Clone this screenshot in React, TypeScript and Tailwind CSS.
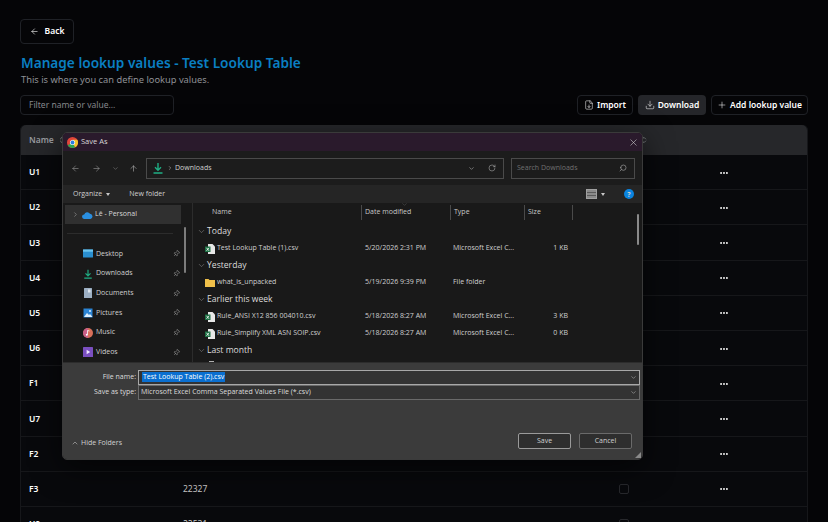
import { ArrowLeft, ArrowRight, ArrowUp, ChevronDown, ChevronRight, ChevronUp, ChevronsUpDown, Download, Ellipsis, FileDown, Plus, RotateCw, Search, Pin, X } from "lucide-react";
import type { ReactNode } from "react";

const rows = [
  ["U1", ""], ["U2", ""], ["U3", ""], ["U4", ""], ["U5", ""], ["U6", ""], ["F1", ""], ["U7", ""], ["F2", ""], ["F3", "22327"], ["U8", "22531"],
];

function DownArrow({ size = 12 }: { size?: number }) {
  return (
    <svg width={size} height={size} viewBox="0 0 12 12" fill="none" stroke="#1fae84" strokeWidth="1.4">
      <path d="M6 1v7M3 5.2 6 8.2 9 5.2M1.5 11h9" />
    </svg>
  );
}

const sidebarItems: { name: string; icon: ReactNode }[] = [
  {
    name: "Desktop",
    icon: (
      <svg width="10" height="9" viewBox="0 0 10 9">
        <rect width="10" height="8" y=".5" rx=".6" fill="#2a8fd0" />
        <rect width="10" height="2.2" y=".5" fill="#6cc4ee" />
      </svg>
    ),
  },
  { name: "Downloads", icon: <DownArrow size={10} /> },
  {
    name: "Documents",
    icon: (
      <svg width="10" height="10" viewBox="0 0 10 10">
        <rect x="1" width="8" height="10" rx=".6" fill="#9db0c4" />
        <rect x="5" y="1.5" width="2.5" height="3" fill="#dfe6ee" />
      </svg>
    ),
  },
  {
    name: "Pictures",
    icon: (
      <svg width="10" height="10" viewBox="0 0 10 10">
        <rect width="9" height="9" x=".5" y=".5" fill="#2b84d4" />
        <path d="M1 9 4 5l2 2 1-1 2.5 3z" fill="#dcefff" />
        <circle cx="7" cy="3" r="1" fill="#dcefff" />
      </svg>
    ),
  },
  {
    name: "Music",
    icon: (
      <svg width="10" height="10" viewBox="0 0 10 10">
        <circle cx="5" cy="5" r="5" fill="#d9705a" />
        <path d="M0 5a5 5 0 0 1 5-5v10a5 5 0 0 1-5-5" fill="#c85f88" />
        <path d="M4.5 2.5v4M4.5 2.5 6.5 3" stroke="#fff" strokeWidth=".8" fill="none" />
        <circle cx="3.8" cy="6.8" r="1" fill="#fff" />
      </svg>
    ),
  },
  {
    name: "Videos",
    icon: (
      <svg width="10" height="10" viewBox="0 0 10 10">
        <rect width="10" height="10" rx=".6" fill="#7a4fc0" />
        <path d="M3.6 2.8v4.4L7.2 5z" fill="#f0e6ff" />
      </svg>
    ),
  },
];

function Excel() {
  return (
    <svg width="10" height="10" viewBox="0 0 10 10" className="shrink-0">
      <path d="M3 0h4.5L10 2.5V10H3z" fill="#e8e8e8" />
      <rect x="0" y="2.5" width="5.5" height="5.5" fill="#1d7044" />
      <path d="M1.5 3.8 4 6.8M4 3.8 1.5 6.8" stroke="#fff" strokeWidth=".8" />
    </svg>
  );
}

function Folder() {
  return (
    <svg width="10" height="9" viewBox="0 0 10 9" className="shrink-0">
      <path d="M0 1h3.5l1 1H10v7H0z" fill="#f0c04a" />
    </svg>
  );
}

function Group({ label }: { label: string }) {
  return (
    <div className="h-[17px] flex items-center gap-px text-[8.6px] text-[#dcdcdc]">
      <ChevronDown size={9} strokeWidth={1.2} className="text-[#a0a0a0]" />
      {label}
    </div>
  );
}

function FileRow({ name, date, type, size, folder }: { name: string; date: string; type: string; size?: string; folder?: boolean }) {
  return (
    <div className="h-[17px] flex items-center text-[7px] text-[#d0d0d0]">
      <div className="w-[168px] pl-[8px] flex items-center gap-[2px]">
        {folder ? <Folder /> : <Excel />}
        <span>{name}</span>
      </div>
      <div className="w-[88px]">{date}</div>
      <div className="w-[74px]">{type}</div>
      <div className="w-[41px] text-right">{size}</div>
    </div>
  );
}

export default function App() {
  return (
    <div className="relative w-[828px] h-[522px] overflow-hidden bg-[#050507] font-['Noto_Sans',sans-serif] text-white">
      <div className="px-5 pt-[19px]">
        <button className="w-[54px] h-[25px] flex items-center justify-center gap-[6px] rounded-[4px] border border-[#1f2126] text-[8.5px] font-semibold">
          <ArrowLeft size={9} strokeWidth={1.6} />
          Back
        </button>
        <h1 className="mt-[9px] pl-px text-[13.65px] leading-[20px] font-semibold text-[#0a7fc2]">Manage lookup values - Test Lookup Table</h1>
        <p className="pl-px text-[9.3px] leading-[14px] text-[#8f9196]">This is where you can define lookup values.</p>
        <div className="mt-[8px] flex items-center justify-between h-[20px]">
          <div className="w-[154px] h-[20px] px-2 flex items-center rounded-[4px] border border-[#1f2126] text-[8.5px] text-[#85878c]">Filter name or value...</div>
          <div className="flex gap-[5px]">
            <button className="w-[56px] h-[20px] flex items-center justify-center gap-[3px] rounded-[4px] border border-[#1f2126] text-[8.5px] font-semibold">
              <FileDown size={10} strokeWidth={1.3} />
              Import
            </button>
            <button className="w-[68px] h-[20px] flex items-center justify-center gap-[3px] rounded-[4px] bg-[#25262a] text-[8.5px] font-semibold">
              <Download size={10} strokeWidth={1.3} />
              Download
            </button>
            <button className="w-[97px] h-[20px] flex items-center justify-center gap-[3px] rounded-[4px] border border-[#1f2126] text-[8.5px] font-semibold">
              <Plus size={10} strokeWidth={1.3} />
              Add lookup value
            </button>
          </div>
        </div>
        <div className="mt-[10px] rounded-t-[5px] border-x border-[#16171a] bg-[#08090c]">
          <div className="h-[30px] rounded-t-[5px] bg-[#26272a] grid grid-cols-[154px_412px_58px_1fr] items-center pl-[8px] text-[8.5px] font-semibold text-[#9a9ca0]">
            <div className="flex items-center gap-1">Name <ChevronsUpDown size={8} /></div>
            <div>Value</div>
            <div className="flex justify-end pr-[5px]"><ChevronsUpDown size={8} /></div>
            <div />
          </div>
          {rows.map(([n, v]) => (
            <div key={n} className="h-[35.2px] shrink-0 grid grid-cols-[154px_412px_58px_1fr] items-center pl-[8px] pt-px border-b border-[#16171a] text-[8.5px]">
              <div className="font-semibold">{n}</div>
              <div className="text-[#c8c8c8]">{v}</div>
              <div className="flex justify-center"><span className="w-[10px] h-[10px] rounded-[2px] border border-[#27282c]" /></div>
              <div className="flex justify-center pr-[12px]"><Ellipsis size={10} strokeWidth={2.6} /></div>
            </div>
          ))}
        </div>
      </div>

      <div className="absolute left-[62px] top-[132px] w-[581px] h-[328px] flex flex-col rounded-[5px] border border-[#3a3a3a] bg-[#191919] font-['Open_Sans',sans-serif] shadow-[0_8px_30px_rgba(0,0,0,0.6)] overflow-hidden">
        <div className="h-[18px] shrink-0 bg-[#2a1a2c] flex items-center pl-[4px] text-[7.5px] text-[#d8d8d8]">
          <svg width="11" height="11" viewBox="0 0 20 20" className="mr-[3px]">
            <circle cx="10" cy="10" r="10" fill="#e0453a" />
            <path d="M10 10 1.3 15 A10 10 0 0 0 15 18.7Z" fill="#2fa350" />
            <path d="M10 10 15 18.7 A10 10 0 0 0 18.7 5H10Z" fill="#f5c32c" />
            <circle cx="10" cy="10" r="4.6" fill="#fff" />
            <circle cx="10" cy="10" r="3.5" fill="#2b7de0" />
          </svg>
          Save As
          <X size={11} strokeWidth={1.2} className="ml-auto mr-[3px]" />
        </div>
        <div className="h-[34px] shrink-0 bg-[#1c1c1c] flex items-center pl-[8px] pr-[7px]">
          <ArrowLeft size={9} strokeWidth={1.4} className="text-[#a8a8a8]" />
          <ArrowRight size={9} strokeWidth={1.4} className="ml-[12px] text-[#a8a8a8]" />
          <ChevronDown size={7} strokeWidth={1.4} className="ml-[11px] text-[#a8a8a8]" />
          <ArrowUp size={9} strokeWidth={1.4} className="ml-[10px] text-[#c8c8c8]" />
          <div className="ml-[8px] h-[21px] w-[358px] border border-[#4a4a4a] bg-[#1c1c1c] flex items-center pl-[5px] pr-[5px] text-[7px] text-[#d0d0d0]">
            <DownArrow />
            <ChevronRight size={6} className="mx-[2.5px] text-[#c0c0c0]" />
            Downloads
            <ChevronDown size={7} className="ml-auto text-[#b0b0b0]" />
            <RotateCw size={8} strokeWidth={1.4} className="ml-[13px] mr-[2px] text-[#c8c8c8]" />
          </div>
          <div className="ml-[7px] h-[21px] flex-1 border border-[#4a4a4a] flex items-center pl-[5px] pr-[7px] text-[7px] text-[#707070]">
            Search Downloads
            <Search size={8} className="ml-auto text-[#a0a0a0] -scale-x-100" />
          </div>
        </div>
        <div className="h-[18px] shrink-0 bg-[#252525] flex items-center pl-[10px] pr-[8px] text-[7px] text-[#d0d0d0]">
          Organize
          <span className="ml-[4px] border-x-[2.5px] border-t-[3px] border-x-transparent border-t-[#c8c8c8]" />
          <span className="ml-[19px]">New folder</span>
          <span className="ml-auto w-[11px] h-[10px] bg-[#8a8a8a] border border-[#a0a0a0] flex flex-col justify-evenly">
            <span className="h-px bg-[#5a5a5a]" />
            <span className="h-px bg-[#5a5a5a]" />
          </span>
          <span className="ml-[4px] border-x-[2.5px] border-t-[3px] border-x-transparent border-t-[#c8c8c8]" />
          <span className="ml-[19px] w-[10px] h-[10px] rounded-full bg-[#0a84e0] flex items-center justify-center text-[7px] font-bold leading-none">?</span>
        </div>
        <div className="flex-1 min-h-0 flex bg-[#191919]">
          <div className="relative w-[130px] shrink-0 border-r border-[#2c2c2c] pt-[2px] pl-[2px]">
            <div className="w-[116px] h-[19px] bg-[#303030] flex items-center pl-[7px] text-[7px] text-[#d8d8d8]">
              <ChevronRight size={7} className="text-[#a0a0a0]" />
              <svg width="11" height="8" viewBox="0 0 11 8" className="ml-[3px] mr-[2px]">
                <path d="M2.5 8a2.3 2.3 0 0 1-.3-4.6A3.2 3.2 0 0 1 8 2.7 2.7 2.7 0 0 1 8.5 8z" fill="#2a8fe0" />
              </svg>
              Lê - Personal
            </div>
            <div className="ml-[2px] mt-[9px] w-[106px] h-px bg-[#2c2c2c]" />
            <div className="mt-[10px]">
              {sidebarItems.map((s) => (
                <div key={s.name} className="h-[19.7px] flex items-center pl-[18px] pr-[12px] text-[7px] text-[#d0d0d0]">
                  {s.icon}
                  <span className="ml-[3px]">{s.name}</span>
                  <Pin size={7} className="ml-auto text-[#9a9a9a] rotate-45" />
                </div>
              ))}
            </div>
            <div className="absolute right-[6px] top-[24px] w-[2px] h-[46px] bg-[#7c7c7c] rounded-full" />
          </div>
          <div className="relative flex-1 min-w-0 pl-[1px]">
            <ChevronUp size={7} strokeWidth={1} className="absolute left-[208px] -top-[2px] text-[#909090] rotate-180" />
            <div className="h-[19px] flex items-center text-[7px] text-[#c8c8c8]">
              <div className="w-[167px] pl-[18px]">Name</div>
              <div className="w-[89px] h-[15px] flex items-center border-l border-[#4a4a4a] pl-[3px]">Date modified</div>
              <div className="w-[74px] h-[15px] flex items-center border-l border-[#4a4a4a] pl-[3px]">Type</div>
              <div className="w-[49px] h-[15px] flex items-center border-x border-[#4a4a4a] pl-[3px]">Size</div>
            </div>
            <div className="pt-[1px] pl-[3px]">
              <Group label="Today" />
              <FileRow name="Test Lookup Table (1).csv" date="5/20/2026 2:31 PM" type="Microsoft Excel C..." size="1 KB" />
              <Group label="Yesterday" />
              <FileRow folder name="what_is_unpacked" date="5/19/2026 9:39 PM" type="File folder" />
              <Group label="Earlier this week" />
              <FileRow name="Rule_ANSI X12 856 004010.csv" date="5/18/2026 8:27 AM" type="Microsoft Excel C..." size="3 KB" />
              <FileRow name="Rule_Simplify XML ASN SOIP.csv" date="5/18/2026 8:27 AM" type="Microsoft Excel C..." size="0 KB" />
              <Group label="Last month" />
            </div>
            <div className="absolute left-[16px] bottom-0 w-[5px] h-px bg-[#b0b0b0]" />
            <div className="absolute right-[3px] top-[11px] w-[2px] h-[31px] bg-[#8a8a8a] rounded-full" />
          </div>
        </div>
        <div className="h-[97px] shrink-0 bg-[#3b3b3b] border-t border-[#2c2c2c] pt-[6px] pr-[2px] flex flex-col relative">
          <div className="flex items-center h-[16px] text-[7px] text-[#dcdcdc]">
            <span className="w-[75px] text-right pr-[2px]">File name:</span>
            <div className="flex-1 h-[15px] border border-[#a8a8a8] bg-[#333] flex items-center pl-[3px] pr-[2px]">
              <span className="bg-[#0a6fd0] text-white px-px">Test Lookup Table (2).csv</span>
              <ChevronDown size={7} className="ml-auto text-[#b0b0b0]" />
            </div>
          </div>
          <div className="flex items-center h-[15px] text-[7px] text-[#dcdcdc]">
            <span className="w-[75px] text-right pr-[2px]">Save as type:</span>
            <div className="flex-1 h-[15px] border border-[#6a6a6a] bg-[#333] flex items-center pl-[2px] pr-[2px]">
              Microsoft Excel Comma Separated Values File (*.csv)
              <ChevronDown size={7} className="ml-auto text-[#b0b0b0]" />
            </div>
          </div>
          <div className="mt-auto mb-[10px] flex items-center text-[7px] text-[#d0d0d0] pl-[8px] pr-[8px]">
            <ChevronUp size={8} strokeWidth={1.6} className="mt-[4px]" />
            <span className="ml-[2px] mt-[4px]">Hide Folders</span>
            <button className="ml-auto w-[53px] h-[16px] rounded-[2px] border border-[#9a9a9a] bg-[#2e2e2e] flex items-center justify-center">Save</button>
            <button className="ml-[8px] w-[53px] h-[16px] rounded-[2px] border border-[#6a6a6a] bg-[#2e2e2e] flex items-center justify-center">Cancel</button>
          </div>
          <svg width="6" height="6" viewBox="0 0 6 6" className="absolute right-px bottom-px">
            <path d="M6 0v6H0z" fill="#8a8a8a" />
          </svg>
        </div>
      </div>
    </div>
  );
}
